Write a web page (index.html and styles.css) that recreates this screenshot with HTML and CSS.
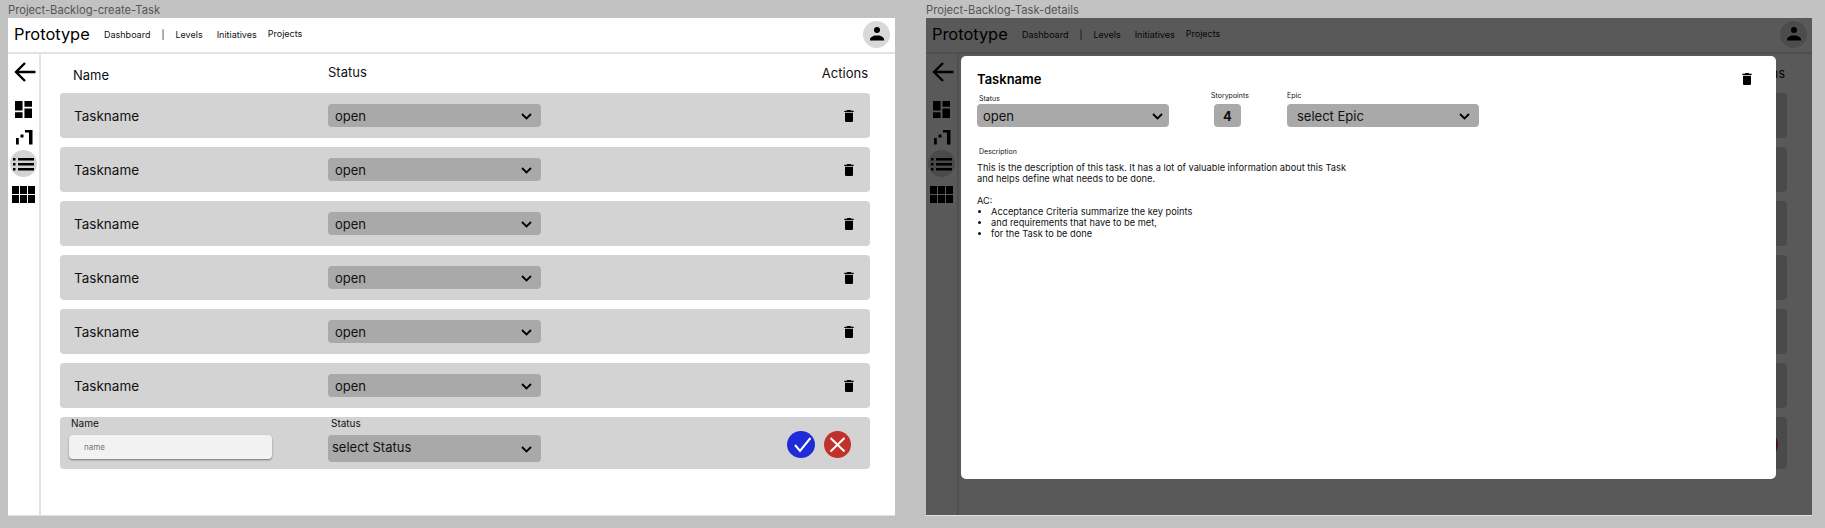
FILE: index.html
```html
<!DOCTYPE html>
<html lang="en">
<head>
    <meta charset="UTF-8">
    <meta name="viewport" content="width=device-width, initial-scale=1.0">
    <title>Project Backlog</title>
    <link rel="stylesheet" href="styles.css">
</head>
<body>
    <svg class="sprite" width="0" height="0">
        <symbol id="i-back" viewBox="0 0 22 22"><path d="M21.500 11H2M11 2l-9 9 9 9" fill="none" stroke="#000" stroke-width="2.400"/></symbol>
        <symbol id="i-dash" viewBox="3 3 18 18"><path d="M3 13h8V3H3v10zm0 8h8v-6H3v6zm10 0h8V11h-8v10zm0-18v6h8V3h-8z"/></symbol>
        <symbol id="i-levels" viewBox="0 0 18 16"><path d="M14 1h3.500v14.500H14zM10 1h4v2.500h-4zM5.500 5.500h3v3h-3zM1 9h2.800v6.500H1z"/></symbol>
        <symbol id="i-list" viewBox="0 0 21 14"><path d="M5 1h16v2.500H5zM5 6h16v2.500H5zM5 11h16v2.500H5zM0 1h2.500v2.500H0zM0 6h2.500v2.500H0zM0 11h2.500v2.500H0z"/></symbol>
        <symbol id="i-grid" viewBox="0 0 23 17"><path d="M0 0h7v8H0zM8 0h7v8H8zM16 0h7v8h-7zM0 9h7v8H0zM8 9h7v8H8zM16 9h7v8h-7z"/></symbol>
        <symbol id="i-trash" viewBox="0 0 24 24"><path d="M6 19c0 1.100.9 2 2 2h8c1.100 0 2-.9 2-2V7H6v12zM19 4h-3.500l-1-1h-5l-1 1H5v2h14V4z"/></symbol>
        <symbol id="i-chevron" viewBox="0 0 11 7"><path d="M1 1l4.500 4.500L10 1" fill="none" stroke="#000" stroke-width="1.800"/></symbol>
        <symbol id="i-person" viewBox="0 0 14 14"><circle cx="7" cy="3" r="3"/><path d="M0 13.500v-1.500c0-1.500 3-3 4.500-3.500h5c1.500.5 4.500 2 4.500 3.500v1.500z"/></symbol>
    </svg>

    <section class="screen">
        <p class="screen-title">Project-Backlog-create-Task</p>
        <div class="frame">
            <header class="topbar">
                <span class="brand">Prototype</span>
                <nav class="nav">
                    <a>Dashboard</a>
                    <a>|</a>
                    <a class="nav-wide">Levels</a>
                    <a>Initiatives</a>
                    <a class="nav-last">Projects</a>
                </nav>
                <span class="avatar"><svg class="icon-person"><use href="#i-person"/></svg></span>
            </header>
            <div class="app">
                <aside class="sidebar">
                    <svg class="icon-back"><use href="#i-back"/></svg>
                    <svg class="icon-dash"><use href="#i-dash"/></svg>
                    <svg class="icon-levels"><use href="#i-levels"/></svg>
                    <span class="side-active"><svg class="icon-list"><use href="#i-list"/></svg></span>
                    <svg class="icon-grid"><use href="#i-grid"/></svg>
                </aside>
                <main class="content">
                    <div class="table-head">
                        <span class="head-name">Name</span>
                        <span class="head-status">Status</span>
                        <span class="head-actions">Actions</span>
                    </div>
                    <div class="rows">
                        <div class="row"><span class="task">Taskname</span><div class="select"><span>open</span><svg class="icon-chevron"><use href="#i-chevron"/></svg></div><svg class="icon-trash"><use href="#i-trash"/></svg></div>
                        <div class="row"><span class="task">Taskname</span><div class="select"><span>open</span><svg class="icon-chevron"><use href="#i-chevron"/></svg></div><svg class="icon-trash"><use href="#i-trash"/></svg></div>
                        <div class="row"><span class="task">Taskname</span><div class="select"><span>open</span><svg class="icon-chevron"><use href="#i-chevron"/></svg></div><svg class="icon-trash"><use href="#i-trash"/></svg></div>
                        <div class="row"><span class="task">Taskname</span><div class="select"><span>open</span><svg class="icon-chevron"><use href="#i-chevron"/></svg></div><svg class="icon-trash"><use href="#i-trash"/></svg></div>
                        <div class="row"><span class="task">Taskname</span><div class="select"><span>open</span><svg class="icon-chevron"><use href="#i-chevron"/></svg></div><svg class="icon-trash"><use href="#i-trash"/></svg></div>
                        <div class="row"><span class="task">Taskname</span><div class="select"><span>open</span><svg class="icon-chevron"><use href="#i-chevron"/></svg></div><svg class="icon-trash"><use href="#i-trash"/></svg></div>
                        <div class="row-new">
                            <div class="field-name">
                                <label>Name</label>
                                <div class="input">name</div>
                            </div>
                            <div class="field-status">
                                <label>Status</label>
                                <div class="select select-tall"><span>select Status</span><svg class="icon-chevron"><use href="#i-chevron"/></svg></div>
                            </div>
                            <div class="new-actions">
                                <span class="btn-ok"><svg viewBox="0 0 28 27"><path d="M8 14l5 6L23.500 7" fill="none" stroke="#fff" stroke-width="2"/></svg></span>
                                <span class="btn-cancel"><svg viewBox="0 0 27 27"><path d="M6.500 7l14 13.500M20.500 7l-14 13.500" fill="none" stroke="#fff" stroke-width="2"/></svg></span>
                            </div>
                        </div>
                    </div>
                </main>
            </div>
        </div>
    </section>

    <section class="screen screen-details">
        <p class="screen-title">Project-Backlog-Task-details</p>
        <div class="frame">
            <header class="topbar">
                <span class="brand">Prototype</span>
                <nav class="nav">
                    <a>Dashboard</a>
                    <a>|</a>
                    <a class="nav-wide">Levels</a>
                    <a>Initiatives</a>
                    <a class="nav-last">Projects</a>
                </nav>
                <span class="avatar"><svg class="icon-person"><use href="#i-person"/></svg></span>
            </header>
            <div class="app">
                <aside class="sidebar">
                    <svg class="icon-back"><use href="#i-back"/></svg>
                    <svg class="icon-dash"><use href="#i-dash"/></svg>
                    <svg class="icon-levels"><use href="#i-levels"/></svg>
                    <span class="side-active"><svg class="icon-list"><use href="#i-list"/></svg></span>
                    <svg class="icon-grid"><use href="#i-grid"/></svg>
                </aside>
                <main class="content">
                    <div class="table-head">
                        <span class="head-name">Name</span>
                        <span class="head-status">Status</span>
                        <span class="head-actions">Actions</span>
                    </div>
                    <div class="rows">
                        <div class="row"></div>
                        <div class="row"></div>
                        <div class="row"></div>
                        <div class="row"></div>
                        <div class="row"></div>
                        <div class="row"></div>
                        <div class="row-new">
                            <div class="new-actions new-actions-wide">
                                <span class="btn-cancel"></span>
                            </div>
                        </div>
                    </div>
                </main>
            </div>
            <div class="overlay"></div>
            <div class="modal">
                <div class="modal-head">
                    <h2>Taskname</h2>
                    <svg class="icon-trash"><use href="#i-trash"/></svg>
                </div>
                <div class="modal-fields">
                    <div class="modal-status">
                        <label>Status</label>
                        <div class="select select-modal"><span>open</span><svg class="icon-chevron"><use href="#i-chevron"/></svg></div>
                    </div>
                    <div class="modal-points">
                        <label>Storypoints</label>
                        <div class="points">4</div>
                    </div>
                    <div class="modal-epic">
                        <label>Epic</label>
                        <div class="select select-epic"><span>select Epic</span><svg class="icon-chevron"><use href="#i-chevron"/></svg></div>
                    </div>
                </div>
                <div class="description">
                    <label>Description</label>
                    <p>This is the description of this task. It has a lot of valuable information about this Task<br>and helps define what needs to be done.</p>
                    <p class="ac-title">AC:</p>
                    <ul>
                        <li>Acceptance Criteria summarize the key points</li>
                        <li>and requirements that have to be met,</li>
                        <li>for the Task to be done</li>
                    </ul>
                </div>
            </div>
        </div>
    </section>
</body>
</html>
```

FILE: styles.css
```css
* {
    box-sizing: border-box;
}
body {
    margin: 0;
    height: 528px;
    overflow: hidden;
    display: flex;
    gap: 31px;
    padding: 0 13px 0 8px;
    background-color: #c2c2c2;
    font-family: Inter, sans-serif;
    color: #000;
}
.sprite {
    position: absolute;
}
.screen {
    width: 887px;
    flex: none;
}
.screen-details {
    width: 886px;
}
.screen-title {
    margin: 0;
    height: 18px;
    padding-top: 3px;
    font-size: 11.2px;
    line-height: 14px;
    color: #555;
}
.frame {
    position: relative;
    height: 498px;
    background: #fff;
    border-bottom: 1px solid #e0e0e0;
    overflow: hidden;
}
.topbar {
    display: flex;
    align-items: center;
    height: 36px;
    padding: 0 5px 2px 6px;
    border-bottom: 2px solid #e3e3e3;
}
.brand {
    font-size: 16.4px;
    width: 90px;
}
.nav {
    display: flex;
    flex: 1;
    margin-top: 1px;
    font-size: 9px;
    color: #111;
}
.nav a {
    margin-right: 11px;
}
.nav .nav-wide {
    margin-right: 14px;
}
.nav .nav-last {
    margin-top: -1px;
}
.avatar {
    display: flex;
    align-items: center;
    justify-content: center;
    width: 27px;
    height: 27px;
    border-radius: 50%;
    background: #d9d9d9;
}
.icon-person {
    width: 14px;
    height: 14px;
    margin-top: -1px;
}
.app {
    display: flex;
    height: 461px;
}
.sidebar {
    width: 33px;
    flex: none;
    display: flex;
    flex-direction: column;
    align-items: center;
    border-right: 2px solid #e3e3e3;
    padding-top: 7px;
}
.sidebar svg {
    display: block;
    flex: none;
}
.icon-back {
    width: 22px;
    height: 22px;
    margin-left: 2px;
}
.icon-dash {
    width: 17px;
    height: 17px;
    margin-top: 18px;
}
.icon-levels {
    width: 18px;
    height: 16px;
    margin-top: 11px;
}
.side-active {
    display: flex;
    align-items: center;
    justify-content: center;
    width: 27px;
    height: 27px;
    flex: none;
    margin-top: 5px;
    border-radius: 50%;
    background: #d3d3d3;
}
.icon-list {
    width: 21px;
    height: 14px;
}
.icon-grid {
    width: 23px;
    height: 17px;
    margin-top: 9px;
}
.content {
    flex: 1;
    padding: 0 25px 0 19px;
}
.table-head {
    position: relative;
    height: 39px;
    font-size: 13px;
    color: #111;
}
.table-head span {
    position: absolute;
}
.head-name {
    left: 13px;
    top: 13px;
}
.head-status {
    left: 268px;
    top: 10px;
}
.head-actions {
    right: 2px;
    top: 11px;
}
.rows {
    display: flex;
    flex-direction: column;
    gap: 9px;
}
.row {
    display: flex;
    align-items: center;
    height: 45px;
    padding: 0 13px 0 14px;
    background: #d3d3d3;
    border-radius: 4px;
}
.task {
    width: 254px;
    font-size: 13.5px;
    color: #111;
}
.select {
    display: flex;
    align-items: center;
    justify-content: space-between;
    width: 213px;
    height: 23px;
    padding: 0 9px 0 7px;
    background: #a9a9a9;
    border-radius: 4px;
    font-size: 13px;
    color: #111;
}
.icon-chevron {
    width: 11px;
    height: 7px;
    margin-top: 2px;
}
.icon-trash {
    width: 16px;
    height: 16px;
    margin-left: auto;
}
.row-new {
    position: relative;
    display: flex;
    height: 52px;
    background: #d3d3d3;
    border-radius: 4px;
}
.row-new label {
    display: block;
    font-size: 10px;
    line-height: 12px;
    color: #111;
}
.field-name {
    width: 268px;
    padding-left: 9px;
}
.field-name label {
    margin-left: 2px;
}
.input {
    width: 203px;
    height: 24px;
    margin-top: 6px;
    padding-left: 15px;
    background: #f2f2f2;
    border-radius: 4px;
    box-shadow: 0 1px 2px rgba(0, 0, 0, 0.45);
    font-size: 8px;
    line-height: 24px;
    color: #777;
}
.field-status label {
    margin-left: 3px;
    margin-bottom: 6px;
}
.select-tall {
    height: 27px;
    padding-left: 4px;
}
.select-tall span {
    margin-top: -3px;
}
.new-actions {
    position: absolute;
    right: 19px;
    top: 14px;
    display: flex;
    align-items: center;
    gap: 9px;
}
.new-actions svg {
    display: block;
}
.new-actions-wide {
    right: 9px;
}
.btn-ok {
    width: 28px;
    height: 27px;
    border-radius: 50%;
    background: #1f2bd9;
}
.btn-cancel {
    width: 27px;
    height: 27px;
    border-radius: 50%;
    background: #c0322b;
}
.overlay {
    position: absolute;
    top: 0;
    left: 0;
    right: 0;
    bottom: 0;
    background: rgba(0, 0, 0, 0.65);
}
.modal {
    position: absolute;
    left: 35px;
    top: 38px;
    width: 815px;
    height: 423px;
    padding: 13px 21px 0 16px;
    background: #fff;
    border-radius: 5px;
    color: #111;
}
.modal-head {
    display: flex;
    align-items: center;
    height: 20px;
    margin-bottom: 2px;
}
.modal-head h2 {
    margin: 0;
    font-size: 13px;
    font-weight: 600;
    color: #000;
}
.modal-fields {
    display: flex;
    height: 37px;
}
.modal label {
    display: block;
    font-size: 7px;
    line-height: 9px;
}
.modal-status {
    width: 234px;
    padding-top: 3px;
}
.modal-status label {
    margin: 0 0 1px 2px;
}
.select-modal {
    width: 192px;
    padding: 0 6px;
}
.modal-points {
    width: 76px;
}
.points {
    display: flex;
    align-items: center;
    justify-content: center;
    width: 27px;
    height: 23px;
    margin: 4px 0 0 3px;
    background: #a9a9a9;
    border-radius: 4px;
    font-size: 13px;
    font-weight: 700;
}
.modal-epic label {
    margin-bottom: 4px;
}
.select-epic {
    width: 192px;
    padding: 0 9px 0 10px;
}
.description {
    margin-top: 19px;
}
.modal .description label {
    margin: 0 0 6px 2px;
}
.description p {
    margin: 0;
    font-size: 9.25px;
    line-height: 11px;
}
.description .ac-title {
    margin-top: 11px;
}
.description ul {
    margin: 0;
    padding-left: 14px;
    font-size: 9.25px;
    line-height: 11px;
}
```
